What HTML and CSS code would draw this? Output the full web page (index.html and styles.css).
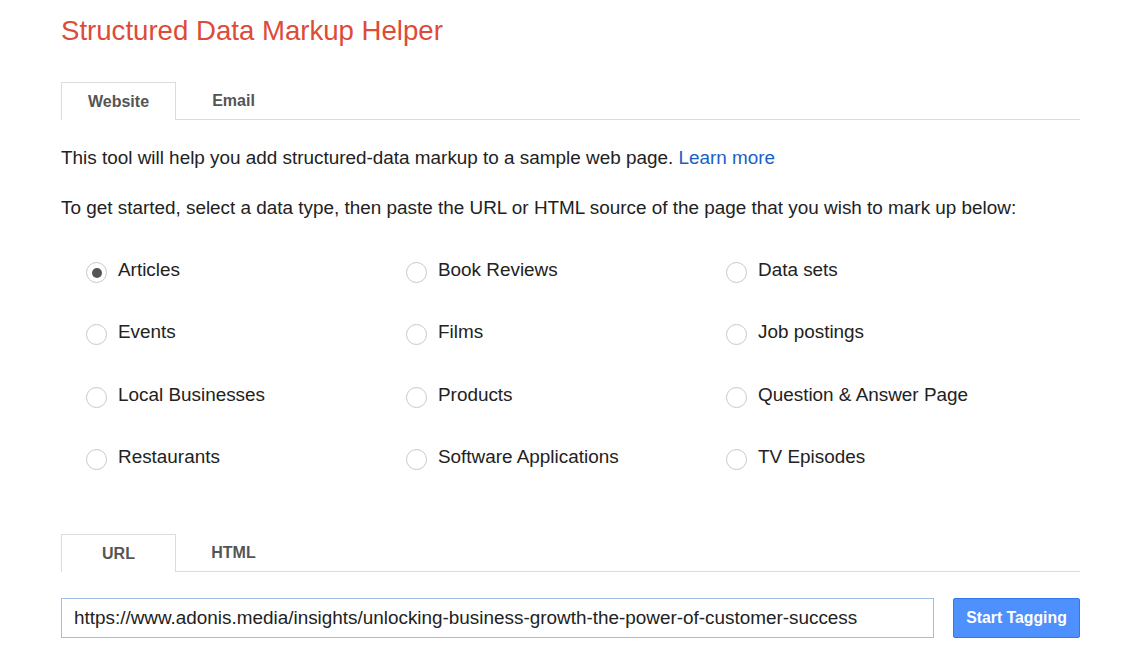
FILE: index.html
```html
<!DOCTYPE html>
<html>
<head>
<meta charset="utf-8">
<link rel="stylesheet" href="styles.css">
</head>
<body>
<div class="page">
  <h1 class="title">Structured Data Markup Helper</h1>
  <div class="tabs">
    <div class="tab active">Website</div>
    <div class="tab">Email</div>
  </div>
  <p class="intro">This tool will help you add structured-data markup to a sample web page. <a href="#" class="link">Learn more</a></p>
  <p class="intro2">To get started, select a data type, then paste the URL or HTML source of the page that you wish to mark up below:</p>
  <div class="types">
    <label class="opt"><span class="radio checked"></span>Articles</label>
    <label class="opt"><span class="radio"></span>Book Reviews</label>
    <label class="opt"><span class="radio"></span>Data sets</label>
    <label class="opt"><span class="radio"></span>Events</label>
    <label class="opt"><span class="radio"></span>Films</label>
    <label class="opt"><span class="radio"></span>Job postings</label>
    <label class="opt"><span class="radio"></span>Local Businesses</label>
    <label class="opt"><span class="radio"></span>Products</label>
    <label class="opt"><span class="radio"></span>Question &amp; Answer Page</label>
    <label class="opt"><span class="radio"></span>Restaurants</label>
    <label class="opt"><span class="radio"></span>Software Applications</label>
    <label class="opt"><span class="radio"></span>TV Episodes</label>
  </div>
  <div class="tabs tabs2">
    <div class="tab active">URL</div>
    <div class="tab">HTML</div>
  </div>
  <div class="urlrow">
    <div class="input">https://www.adonis.media/insights/unlocking-business-growth-the-power-of-customer-success</div>
    <button class="btn">Start Tagging</button>
  </div>
</div>
</body>
</html>
```
FILE: styles.css
```css
html, body { margin: 0; padding: 0; background: #fff; }
body { font-family: "Liberation Sans", Arial, sans-serif; color: #222; }
.page { width: 1019px; padding: 0 0 0 61px; }
.title { margin: 0; padding-top: 14px; font-weight: normal; font-size: 27.6px; line-height: 34px; color: #dd4b39; }
.tabs { display: flex; margin-top: 34px; border-bottom: 1px solid #dcdcdc; height: 37px; }
.tab { width: 115px; box-sizing: border-box; height: 38px; text-align: center; font-size: 16px; font-weight: bold; color: #555; line-height: 37px; }
.tab.active { border: 1px solid #dcdcdc; border-bottom: none; background: #fff; }
.intro { margin: 26px 0 0; font-size: 18.9px; line-height: 24px; }
.intro2 { margin: 26px 0 0; font-size: 18.9px; line-height: 24px; }
.link { color: #1a5fc7; text-decoration: none; }
.types { display: grid; grid-template-columns: 320px 320px 320px; row-gap: 38.3px; margin: 38px 0 0 25px; }
.opt { display: flex; align-items: flex-start; font-size: 18.9px; line-height: 24px; height: 24px; }
.radio { width: 21px; height: 21px; border: 1px solid #c8c8c8; border-radius: 50%; margin: 4px 11px 0 0; box-sizing: border-box; display: flex; align-items: center; justify-content: center; flex: none; }
.radio.checked::after { content: ""; width: 10px; height: 10px; border-radius: 50%; background: #555; }
.tabs2 { margin-top: 65px; }
.urlrow { display: flex; margin-top: 26px; align-items: flex-start; gap: 19px; }
.input { width: 873px; height: 40px; box-sizing: border-box; border: 1px solid #9fbde6; padding: 0 12px; font-size: 18.9px; line-height: 38px; color: #222; white-space: nowrap; overflow: hidden; }
.btn { width: 127px; height: 40px; background: #4d90fe; border: 1px solid #3079ed; border-radius: 2px; color: #fff; font-family: "Liberation Sans", Arial, sans-serif; font-weight: bold; font-size: 15.8px; padding: 0; }
```
